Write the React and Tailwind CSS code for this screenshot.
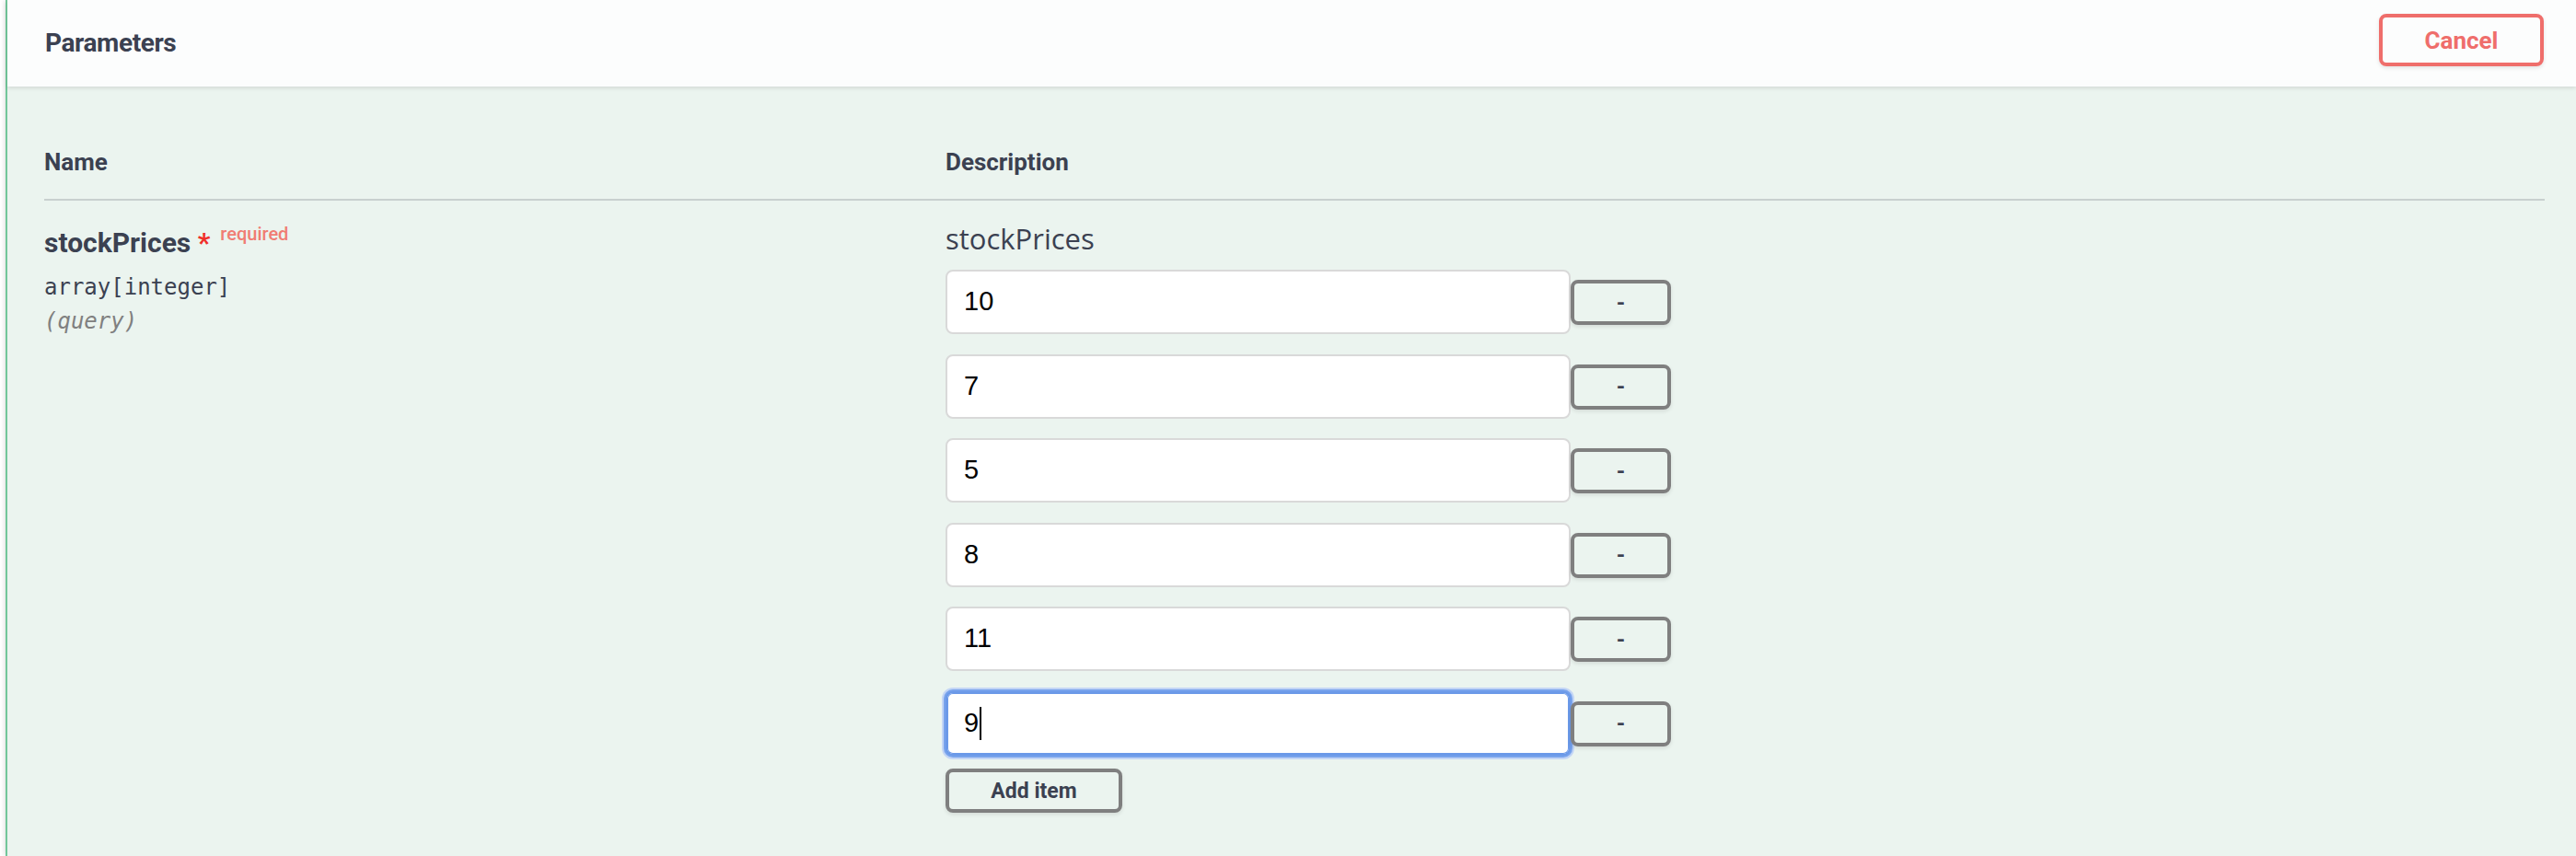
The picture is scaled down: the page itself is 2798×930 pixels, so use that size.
import React from "react";

const values = ["10", "7", "5", "8", "11", "9"];

function Row({ value, focused }) {
  return (
    <div className="flex items-start">
      <div
        className={
          focused
            ? "w-[679px] h-[70px] rounded-[8px] bg-white border-2 border-[#6b99e8] shadow-[inset_0_0_0_1px_#6b99e8,0_0_0_2px_#78a3ec,0_0_0_4px_#c3d5f5] flex items-center pl-[18px]"
            : "w-[679px] h-[70px] rounded-[8px] bg-white border-2 border-[#d9d9d9] flex items-center pl-[18px]"
        }
      >
        <span className="font-['Liberation_Sans',Arial,sans-serif] text-[29px] text-black">{value}</span>
        {focused && <span className="ml-[1px] w-[2px] h-[36px] bg-black" />}
      </div>
      <button className="mt-[11px] w-[109px] h-[49px] border-4 border-[#7f7f7f] rounded-[8px] flex items-center justify-center font-['Roboto',sans-serif] font-bold text-[24px] leading-none text-[#3b4151] shadow-[0_2px_4px_rgba(0,0,0,0.1)]">
        -
      </button>
    </div>
  );
}

export default function App() {
  return (
    <div className="w-[2798px] h-[930px] bg-white overflow-hidden">
      <div className="ml-[6px] h-full border-l-2 border-[#72c69a] bg-[#ebf4ef] shadow-[0_0_6px_rgba(0,0,0,0.19)]">
        <div className="relative z-10 h-[94px] bg-[#fcfdfd] shadow-[0_2px_4px_rgba(0,0,0,0.1)] flex items-center justify-between pl-[41px] pr-[35px]">
          <h4 className="font-['Roboto',sans-serif] font-bold text-[28px] leading-none text-[#3b4151] tracking-[-0.4px]">
            Parameters
          </h4>
          <button className="self-start mt-[15px] w-[179px] h-[57px] border-4 border-[#ef6e6b] rounded-[8px] flex items-center justify-center font-['Roboto',sans-serif] font-bold text-[26px] leading-none text-[#ef6e6b] shadow-[0_2px_4px_rgba(0,0,0,0.1)]">
            Cancel
          </button>
        </div>
        <div className="pl-[40px] pr-[34px]">
          <div className="grid grid-cols-[979px_1fr] pt-[69px] pb-[27px] border-b-2 border-[#c8d0cf] font-['Roboto',sans-serif] font-bold text-[26px] leading-none text-[#3b4151]">
            <div>Name</div>
            <div>Description</div>
          </div>
          <div className="grid grid-cols-[979px_1fr]">
            <div className="pt-[31px] text-[#3b4151]">
              <div className="font-['Roboto',sans-serif] font-bold text-[30px] leading-none whitespace-nowrap">
                stockPrices<span className="text-[#f0302a]">&nbsp;*</span>
                <span className="relative -top-[13px] ml-[11px] text-[20px] font-medium text-[#f07d73]">required</span>
              </div>
              <div className="mt-[21px] font-['DejaVu_Sans_Mono',monospace] text-[24px] leading-none">
                array[integer]
              </div>
              <div className="mt-[13px] font-['DejaVu_Sans_Mono',monospace] italic text-[24px] leading-none text-[#808080]">
                (query)
              </div>
            </div>
            <div className="pt-[26px]">
              <div className="font-['Open_Sans',sans-serif] text-[31px] leading-none text-[#3b4151]">
                stockPrices
              </div>
              <div className="mt-[18px] flex flex-col gap-[21.5px]">
                {values.map((v, i) => (
                  <Row key={i} value={v} focused={i === values.length - 1} />
                ))}
              </div>
              <button className="mt-[14.5px] w-[192px] h-[48px] border-4 border-[#7f7f7f] rounded-[8px] flex items-center justify-center font-['Roboto',sans-serif] font-bold text-[23px] leading-none text-[#3b4151] shadow-[0_2px_4px_rgba(0,0,0,0.1)]">
                Add item
              </button>
            </div>
          </div>
        </div>
      </div>
    </div>
  );
}
